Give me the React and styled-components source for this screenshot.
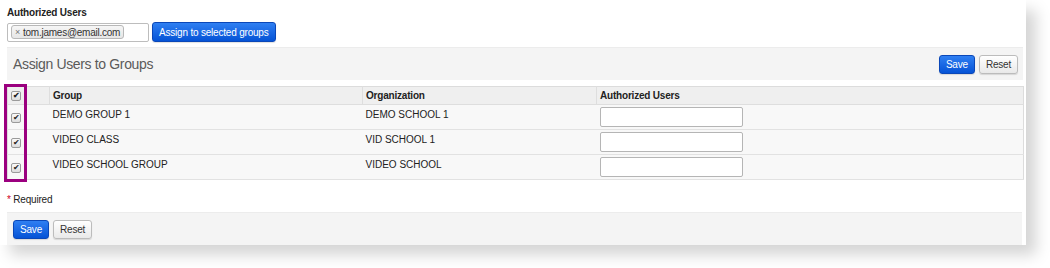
import React from "react"
import styled, { createGlobalStyle } from "styled-components"

const GlobalStyle = createGlobalStyle`
  body {
    margin: 0;
    background: #ffffff;
    font-family: "Liberation Sans", Arial, sans-serif;
  }
`

const Page = styled.div`
  width: 1050px;
  height: 268px;
  background: #fff;
  overflow: hidden;
`

const Panel = styled.div`
  width: 1026px;
  height: 245px;
  box-sizing: border-box;
  padding: 6px 3px 0 7px;
  background: #fff;
  box-shadow: 10px 10px 14px rgba(0, 0, 0, 0.17);
  display: flex;
  flex-direction: column;
`

const Label = styled.div`
  font-size: 10px;
  font-weight: bold;
  letter-spacing: -0.2px;
  color: #222;
  line-height: 14px;
  height: 16px;
`

const AssignRow = styled.div`
  display: flex;
  align-items: center;
  gap: 3px;
  height: 20px;
`

const TagInput = styled.div`
  width: 142px;
  height: 19px;
  box-sizing: border-box;
  border: 1px solid #bdbdbd;
  border-radius: 2px;
  background: #fff;
  display: flex;
  align-items: center;
  padding-left: 3px;
`

const Tag = styled.span`
  display: inline-flex;
  align-items: center;
  gap: 3px;
  height: 12px;
  padding: 0 3px;
  border: 1px solid #b8b8b8;
  border-radius: 3px;
  background: linear-gradient(#f6f6f6, #e6e6e6);
  font-size: 10px;
  letter-spacing: -0.25px;
  color: #333;

  .x {
    color: #777;
    font-size: 9px;
  }
`

const Button = styled.button`
  height: ${({ $h }) => $h || 19}px;
  padding: 0 ${({ $px }) => $px || 6}px;
  font-family: "Liberation Sans", Arial, sans-serif;
  font-size: 10px;
  letter-spacing: -0.2px;
  border-radius: 3px;
  cursor: pointer;
  border: 1px solid ${({ $primary }) => ($primary ? "#0a47b8" : "#bcbcbc")};
  color: ${({ $primary }) => ($primary ? "#fff" : "#333")};
  background: ${({ $primary }) =>
    $primary
      ? "linear-gradient(#2f7ff2, #0553d6)"
      : "linear-gradient(#ffffff, #e9e9e9)"};
  box-shadow: 0 1px 1px rgba(0, 0, 0, 0.12);
`

const Bar = styled.div`
  flex: none;
  background: #f4f4f4;
  border-top: 1px solid #ececec;
  display: flex;
  align-items: center;
  gap: 4px;
  box-sizing: border-box;
`

const HeaderBar = styled(Bar)`
  margin-top: 5px;
  height: 33px;
  padding: 0 5px 0 6px;
  justify-content: space-between;
`

const Title = styled.h2`
  margin: 0;
  font-weight: normal;
  font-size: 14px;
  letter-spacing: -0.35px;
  color: #5a5a5a;
`

const Buttons = styled.div`
  display: flex;
  gap: 4px;
`

const TableWrap = styled.div`
  flex: none;
  position: relative;
  margin-top: 6px;
  margin-right: -1px;
`

const Table = styled.table`
  width: 100%;
  border-collapse: collapse;
  border: 1px solid #dcdcdc;
  font-size: 10px;
  color: #222;

  th {
    background: #efefef;
    text-align: left;
    font-weight: bold;
    letter-spacing: -0.2px;
    height: 17px;
    padding: 0 3px;
    border-left: 1px solid #dedede;
    border-bottom: 1px solid #dedede;
  }
  th:first-child {
    border-left: none;
  }
  tbody tr {
    height: 25px;
  }
  td {
    background: #f8f8f8;
    padding: 0 3px;
    line-height: 12px;
    vertical-align: top;
    border-bottom: 1px solid #e2e2e2;
  }
  td.text {
    padding-top: 4px;
  }
  td.check,
  th.check {
    width: 14px;
    padding: 0 0 0 3px;
  }
  td.check {
    padding-top: 7px;
  }
`

const Check = styled.span`
  display: inline-block;
  width: 8px;
  height: 8px;
  border: 1px solid #9a9a9a;
  border-radius: 2px;
  background: linear-gradient(#fafafa, #dcdcdc);
  position: relative;
  vertical-align: middle;

  &::after {
    content: "✔";
    position: absolute;
    left: 1px;
    top: -2px;
    font-size: 8px;
    line-height: 12px;
    color: #222;
  }
`

const CellInput = styled.input`
  display: block;
  width: 143px;
  height: 20px;
  box-sizing: border-box;
  margin: 2px 0 0;
  border: 1px solid #b5b5b5;
  border-radius: 2px;
  background: #fff;
`

const Highlight = styled.div`
  position: absolute;
  left: -3px;
  top: -2px;
  width: 17px;
  height: 92px;
  border: 3px solid #9b007f;
  pointer-events: none;
`

const Required = styled.div`
  flex: none;
  margin-top: 14px;
  font-size: 10px;
  letter-spacing: -0.2px;
  line-height: 12px;
  color: #222;
  height: 18px;

  span {
    color: #d0021b;
  }
`

const FooterBar = styled(Bar)`
  height: 33px;
  padding: 0 6px;
  margin-right: 1px;
`

const rows = [
  ["DEMO GROUP 1", "DEMO SCHOOL 1"],
  ["VIDEO CLASS", "VID SCHOOL 1"],
  ["VIDEO SCHOOL GROUP", "VIDEO SCHOOL"],
]

export default function App() {
  return (
    <Page>
      <GlobalStyle />
      <Panel>
        <Label>Authorized Users</Label>
        <AssignRow>
          <TagInput>
            <Tag>
              <span className="x">×</span>tom.james@email.com
            </Tag>
          </TagInput>
          <Button $primary $h={20} $px={6}>Assign to selected groups</Button>
        </AssignRow>

        <HeaderBar>
          <Title>Assign Users to Groups</Title>
          <Buttons>
            <Button $primary>Save</Button>
            <Button>Reset</Button>
          </Buttons>
        </HeaderBar>

        <TableWrap>
          <Table>
            <thead>
              <tr>
                <th className="check"><Check /></th>
                <th style={{ width: 17 }}></th>
                <th style={{ width: 306 }}>Group</th>
                <th style={{ width: 227 }}>Organization</th>
                <th>Authorized Users</th>
              </tr>
            </thead>
            <tbody>
              {rows.map(([group, org]) => (
                <tr key={group}>
                  <td className="check"><Check /></td>
                  <td></td>
                  <td className="text">{group}</td>
                  <td className="text">{org}</td>
                  <td><CellInput /></td>
                </tr>
              ))}
            </tbody>
          </Table>
          <Highlight />
        </TableWrap>

        <Required><span>*</span> Required</Required>

        <FooterBar>
          <Button $primary>Save</Button>
          <Button>Reset</Button>
        </FooterBar>
      </Panel>
    </Page>
  )
}
